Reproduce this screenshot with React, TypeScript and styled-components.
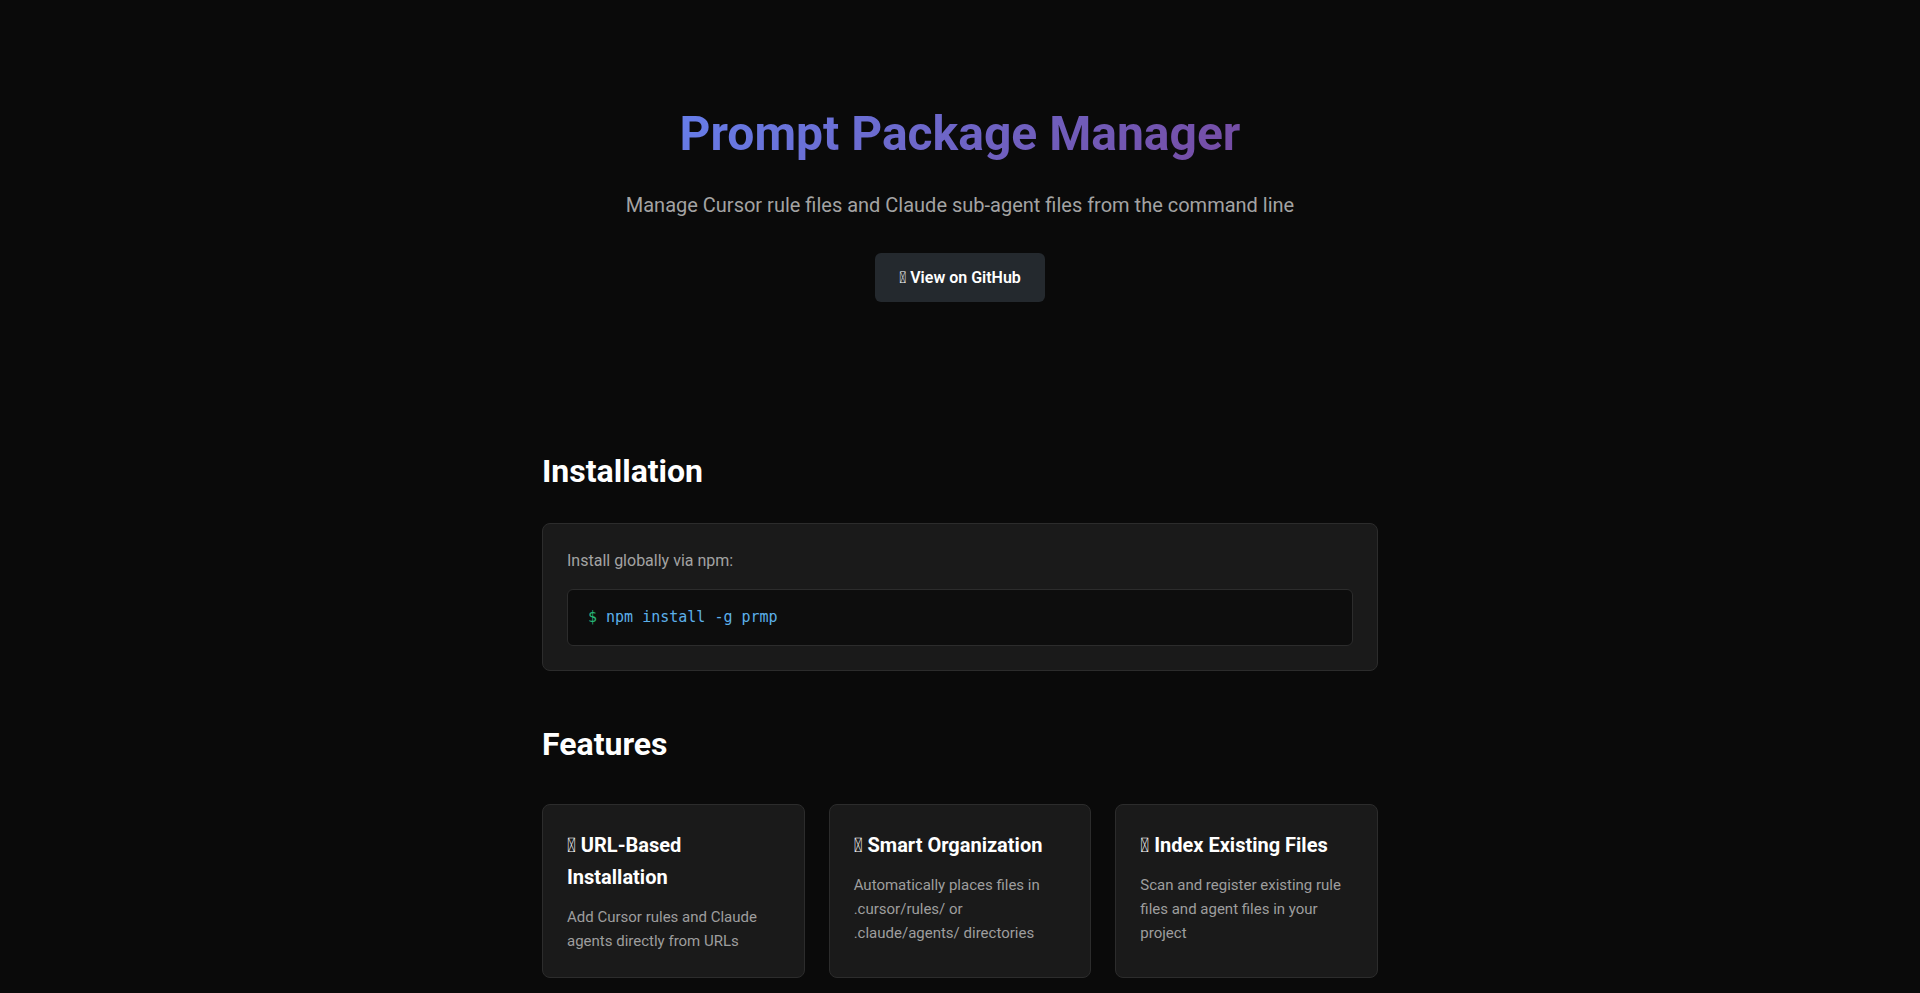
import React from "react";
import styled, { createGlobalStyle } from "styled-components";

const GlobalStyle = createGlobalStyle`
  html, body {
    margin: 0;
    padding: 0;
    background: #0a0a0a;
    color: #e6e6e6;
    font-family: Roboto, "Noto Sans", "Liberation Sans", sans-serif;
  }
  * { box-sizing: border-box; }
`;

const Page = styled.div`
  min-height: 100vh;
  background: #0a0a0a;
`;

const Hero = styled.header`
  display: flex;
  flex-direction: column;
  align-items: center;
  text-align: center;
  padding: 105px 32px 150px;
`;

const Title = styled.h1`
  margin: 0;
  font-size: 48px;
  line-height: 1.2;
  font-weight: 700;
  background: linear-gradient(135deg, #667eea 0%, #764ba2 100%);
  -webkit-background-clip: text;
  background-clip: text;
  color: transparent;
`;

const Subtitle = styled.p`
  margin: 26px 0 0;
  font-size: 20px;
  line-height: 1.6;
  color: #a3a3a3;
`;

const GitHubButton = styled.a`
  display: inline-block;
  margin-top: 32px;
  padding: 12px 24px;
  background: #24292e;
  color: #ffffff;
  border-radius: 6px;
  font-size: 16px;
  line-height: 1.6;
  font-weight: 600;
  text-decoration: none;
`;

const Main = styled.main`
  max-width: 900px;
  margin: 0 auto;
  padding: 0 32px;
`;

const Section = styled.section<{ $gap: number }>`
  margin-bottom: ${(p) => p.$gap}px;
`;

const SectionTitle = styled.h2<{ $space: number }>`
  margin: 0 0 ${(p) => p.$space}px;
  font-size: 32px;
  line-height: 1.2;
  font-weight: 700;
  color: #ffffff;
`;

const Card = styled.div`
  background: #1a1a1a;
  border: 1px solid #2c2c2c;
  border-radius: 8px;
  padding: 24px;
`;

const Note = styled.p`
  margin: 0 0 16px;
  font-size: 16px;
  line-height: 1.6;
  color: #a3a3a3;
`;

const CodeBlock = styled.pre`
  margin: 0;
  padding: 16px 20px;
  background: #0d0d0d;
  border: 1px solid #2c2c2c;
  border-radius: 6px;
  font-family: "DejaVu Sans Mono", "Liberation Mono", monospace;
  font-size: 15px;
  line-height: 1.5;
  color: #5cb0ea;
`;

const Prompt = styled.span`
  color: #27b577;
`;

const FeatureGrid = styled.div`
  display: grid;
  grid-template-columns: repeat(3, 1fr);
  gap: 24px;
`;

const FeatureTitle = styled.h3`
  margin: 0 0 12px;
  font-size: 20px;
  line-height: 1.6;
  font-weight: 700;
  color: #ffffff;
`;

const FeatureText = styled.p`
  margin: 0;
  font-size: 15px;
  line-height: 1.6;
  color: #9e9e9e;
`;

const MISSING = "\uE000";

const features = [
  {
    title: `${MISSING} URL-Based Installation`,
    text: "Add Cursor rules and Claude agents directly from URLs",
  },
  {
    title: `${MISSING} Smart Organization`,
    text: "Automatically places files in .cursor/rules/ or .claude/agents/ directories",
  },
  {
    title: `${MISSING} Index Existing Files`,
    text: "Scan and register existing rule files and agent files in your project",
  },
];

export default function App() {
  return (
    <Page>
      <GlobalStyle />
      <Hero>
        <Title>Prompt Package Manager</Title>
        <Subtitle>
          Manage Cursor rule files and Claude sub-agent files from the command line
        </Subtitle>
        <GitHubButton href="#">{MISSING} View on GitHub</GitHubButton>
      </Hero>
      <Main>
        <Section $gap={54}>
          <SectionTitle $space={32}>Installation</SectionTitle>
          <Card>
            <Note>Install globally via npm:</Note>
            <CodeBlock>
              <Prompt>$</Prompt> npm install -g prmp
            </CodeBlock>
          </Card>
        </Section>
        <Section $gap={48}>
          <SectionTitle $space={41}>Features</SectionTitle>
          <FeatureGrid>
            {features.map((f) => (
              <Card key={f.title}>
                <FeatureTitle>{f.title}</FeatureTitle>
                <FeatureText>{f.text}</FeatureText>
              </Card>
            ))}
          </FeatureGrid>
        </Section>
      </Main>
    </Page>
  );
}
